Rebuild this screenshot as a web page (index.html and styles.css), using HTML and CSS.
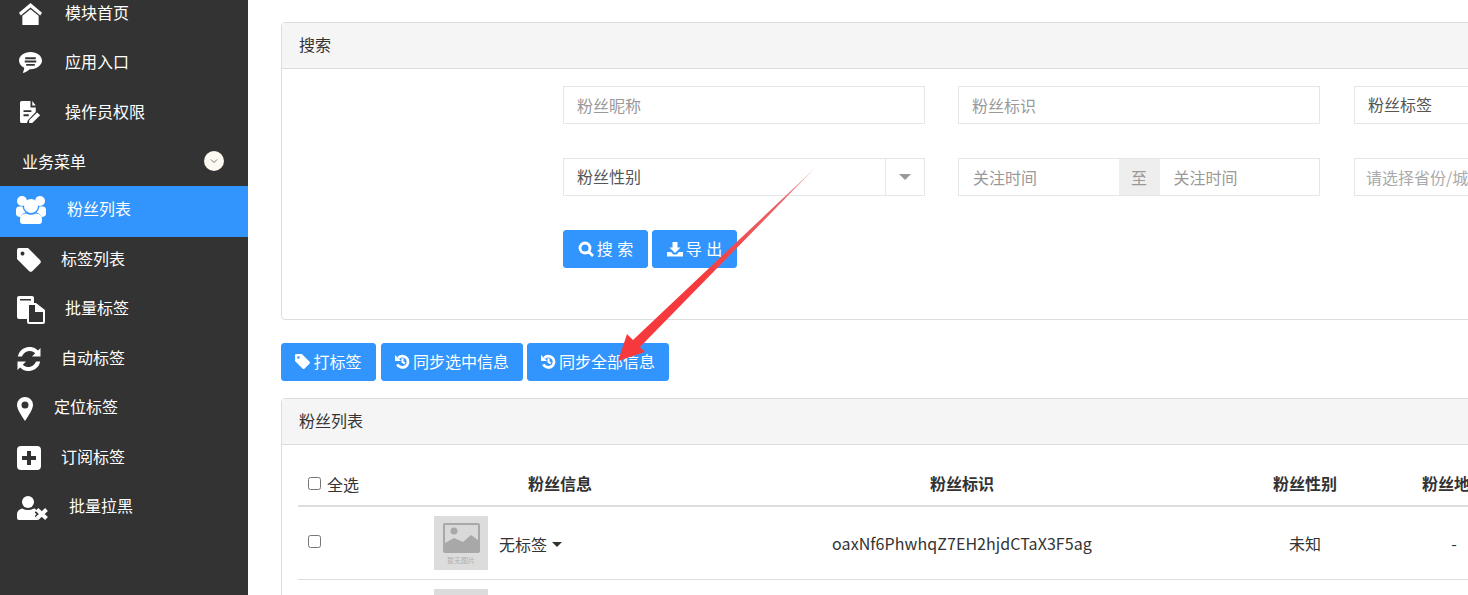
FILE: index.html
```html
<!DOCTYPE html>
<html lang="zh-CN">
<head>
<meta charset="utf-8">
<title>粉丝列表</title>
<link rel="stylesheet" href="styles.css">
</head>
<body>
<div class="app">
  <aside class="sidebar">
    <ul class="menu">
      <li class="item"><svg class="ic ic-home" viewBox="0 0 24 24" preserveAspectRatio="none"><path d="M12 0 0 10.500 1.800 13.500 12 4.800 22.200 13.500 24 10.500Z"/><path d="M3.500 14 12 6.800 20.500 14V24H3.500Z"/></svg><span class="t t-home">模块首页</span></li>
      <li class="item"><svg class="ic ic-chat" viewBox="0 0 24 24"><path fill-rule="evenodd" d="M12 1C5.400 1 0 4.900 0 10c0 3.300 2.200 6 5.500 7.600C5.300 19.700 4.500 21.500 4 23c2.800-.6 5.300-2.200 7-4h1c6.600 0 12-4 12-9S18.600 1 12 1ZM6.500 6.500h11V8.500h-11ZM6 10h12v2H6ZM7.500 13.500h9v2h-9Z"/></svg><span class="t t-home">应用入口</span></li>
      <li class="item"><svg class="ic ic-doc" viewBox="0 0 24 24" preserveAspectRatio="none"><path fill-rule="evenodd" d="M2 0H12V7H18V12L9 21 8 24H2A2 2 0 0 1 0 22V2A2 2 0 0 1 2 0ZM14 0 18 5H14ZM4 10V12H13V10ZM4 14.500V16.500H10V14.500Z"/><path d="M19.500 12.500 23 15.500 14 24H10.500V21Z"/></svg><span class="t t-home">操作员权限</span></li>
      <li class="item section"><span class="t t-sec">业务菜单</span><span class="toggle"><svg viewBox="0 0 10 10"><path d="M2 3.500 5 6.500 8 3.500" fill="none" stroke="#777" stroke-width="1"/></svg></span></li>
      <li class="item active"><svg class="ic ic-users" viewBox="0 0 30 28"><circle cx="6" cy="5" r="5"/><circle cx="24" cy="5" r="5"/><circle cx="15" cy="10" r="7"/><path d="M0 13A3 3 0 0 1 3 10.500H6.500Q7 14 9.500 16.500 5.500 17.500 4.500 21 0 20.500 0 18Z"/><path d="M30 13A3 3 0 0 0 27 10.500H23.500Q23 14 20.500 16.500 24.500 17.500 25.500 21 30 20.500 30 18Z"/><path d="M10 17.500Q15 20 20 17.500 26 18 26 23V25Q26 28 23 28H7Q4 28 4 25V23Q4 18 10 17.500Z"/></svg><span class="t t-fans">粉丝列表</span></li>
      <li class="item lower"><svg class="ic ic-tag" viewBox="0 0 24 24"><path fill-rule="evenodd" d="M2 0H11L23 12A2.500 2.500 0 0 1 23 15.500L15.500 23A2.500 2.500 0 0 1 12 23L0 11V2A2 2 0 0 1 2 0ZM5.500 3.500A2 2 0 1 0 5.500 7.500 2 2 0 0 0 5.500 3.500Z"/></svg><span class="t t-tag">标签列表</span></li>
      <li class="item lower"><svg class="ic ic-copy" viewBox="0 0 28 28"><path fill-rule="evenodd" d="M2 0H15A2 2 0 0 1 17 2V7H19L28 14V26A2 2 0 0 1 26 28H12A2 2 0 0 1 10 26V23H2A2 2 0 0 1 0 21V2A2 2 0 0 1 2 0ZM3 3V4.500H14V3ZM12 9V26H26V16H18V9Z"/><path d="M20 9V14H26Z"/></svg><span class="t t-batch">批量标签</span></li>
      <li class="item lower"><svg class="ic ic-sync" viewBox="0 0 24 24"><path d="M23.500 1V9.500H15L18.200 6.300A8 8 0 0 0 5 9.500H.8A12 12 0 0 1 21 3.500Z"/><path d="M.5 23V14.500H9L5.800 17.700A8 8 0 0 0 19 14.500H23.200A12 12 0 0 1 3 20.500Z"/></svg><span class="t t-sync">自动标签</span></li>
      <li class="item lower"><svg class="ic ic-pin" viewBox="0 0 16 24"><path fill-rule="evenodd" d="M8 0A8 8 0 0 0 0 8C0 12 4 18 8 24 12 18 16 12 16 8A8 8 0 0 0 8 0ZM8 4.500A3.500 3.500 0 1 1 8 11.500 3.500 3.500 0 0 1 8 4.500Z"/></svg><span class="t t-pin">定位标签</span></li>
      <li class="item lower"><svg class="ic ic-plus" viewBox="0 0 24 24"><path fill-rule="evenodd" d="M4 0H20A4 4 0 0 1 24 4V20A4 4 0 0 1 20 24H4A4 4 0 0 1 0 20V4A4 4 0 0 1 4 0ZM10 5V10H5V14H10V19H14V14H19V10H14V5Z"/></svg><span class="t t-tag">订阅标签</span></li>
      <li class="item lower"><svg class="ic ic-ban" viewBox="0 0 32 24"><circle cx="11" cy="6" r="6"/><path d="M5 12.500Q11 15.500 17 12.500 20 13 21 16V24H2A2 2 0 0 1 0 22V18Q0 14 5 12.500Z"/><path d="M20 14 29.500 22.500M29.500 14 20 22.500" fill="none" stroke="#333" stroke-width="7"/><path d="M20 13.500 29.500 22.500M29.500 13.500 20 22.500" fill="none" stroke="#fff" stroke-width="4"/></svg><span class="t t-ban">批量拉黑</span></li>
    </ul>
  </aside>
  <main class="main">
    <section class="panel search">
      <h2 class="panel-head">搜索</h2>
      <div class="search-body">
        <div class="field ph">粉丝昵称</div>
        <div class="field ph">粉丝标识</div>
        <div class="field val">粉丝标签</div>
        <div class="field val select"><span class="select-text">粉丝性别</span><span class="select-arrow"><i class="caret"></i></span></div>
        <div class="field range"><span class="ph range-in">关注时间</span><span class="addon">至</span><span class="ph range-in">关注时间</span></div>
        <div class="field ph small">请选择省份/城市</div>
        <div class="actions">
          <button class="btn spaced"><svg class="bi bi-lg" viewBox="0 0 16 16"><path fill="none" stroke="#fff" stroke-width="2.800" d="M7 2a5 5 0 1 0 0 10 5 5 0 0 0 0-10ZM10.500 10.500 15 15"/></svg>搜 索</button>
          <button class="btn spaced"><svg class="bi bi-lg" viewBox="0 0 16 16"><path d="M5.500 1h5v5.500h3L8 12 2.500 6.500h3Z"/><path d="M0 11h4l2.500 2.500h3L12 11h4v4.500H0Z"/></svg>导 出</button>
        </div>
      </div>
    </section>
    <div class="toolbar">
      <button class="btn"><svg class="bi" viewBox="0 0 24 24"><path fill-rule="evenodd" d="M2 0H11L23 12A2.500 2.500 0 0 1 23 15.500L15.500 23A2.500 2.500 0 0 1 12 23L0 11V2A2 2 0 0 1 2 0ZM5.500 3.500A2 2 0 1 0 5.500 7.500 2 2 0 0 0 5.500 3.500Z"/></svg>打标签</button>
      <button class="btn"><svg class="bi" viewBox="0 0 16 16"><path fill="none" stroke="#fff" stroke-width="3" d="M3.500 4.200A6 6 0 1 1 2.500 11"/><path d="M0 1 6.500 7.500H0Z"/><path fill="none" stroke="#fff" stroke-width="2.200" d="M8 4.500V8.500L10.500 10"/></svg>同步选中信息</button>
      <button class="btn"><svg class="bi" viewBox="0 0 16 16"><path fill="none" stroke="#fff" stroke-width="3" d="M3.500 4.200A6 6 0 1 1 2.500 11"/><path d="M0 1 6.500 7.500H0Z"/><path fill="none" stroke="#fff" stroke-width="2.200" d="M8 4.500V8.500L10.500 10"/></svg>同步全部信息</button>
    </div>
    <section class="panel list">
      <h2 class="panel-head">粉丝列表</h2>
      <div class="list-body">
        <table class="table">
          <colgroup><col class="c1"><col class="c2"><col class="c3"><col class="c4"><col class="c5"></colgroup>
          <thead>
            <tr>
              <th class="check-all"><label class="all"><input type="checkbox" class="cb">全选</label></th>
              <th>粉丝信息</th><th>粉丝标识</th><th>粉丝性别</th><th>粉丝地区</th>
            </tr>
          </thead>
          <tbody>
            <tr>
              <td class="check"><input type="checkbox" class="cb"></td>
              <td class="info"><div class="info-wrap"><span class="thumb"><svg viewBox="0 0 54 54"><rect x="9" y="7" width="37" height="30" rx="2" fill="#a8a8a8"/><rect x="11" y="9" width="33" height="18" fill="#d9d9d9"/><circle cx="20" cy="15" r="3.500" fill="#a8a8a8"/><path d="M11 27 20 22 29 26 37 19 44 24V28H11Z" fill="#a8a8a8"/></svg><em class="thumb-text">暂无图片</em></span><span class="tagdrop">无标签<i class="caret dark"></i></span></div></td>
              <td class="mono">oaxNf6PhwhqZ7EH2hjdCTaX3F5ag</td>
              <td>未知</td>
              <td>-</td>
            </tr>
            <tr>
              <td></td>
              <td class="info"><div class="info-wrap"><span class="thumb"></span></div></td>
              <td></td><td></td><td></td>
            </tr>
          </tbody>
        </table>
      </div>
    </section>
  </main>
</div>
<svg class="arrow" viewBox="0 0 1468 595"><defs><linearGradient id="ag" gradientUnits="userSpaceOnUse" x1="816" y1="167" x2="700" y2="282"><stop offset="0" stop-color="#f08a8a" stop-opacity=".5"/><stop offset=".3" stop-color="#e8656a"/><stop offset="1" stop-color="#f5393c"/></linearGradient></defs><path fill="url(#ag)" d="M816 167 640 347 645 352 618 361 627 334 633 340Z"/></svg>
</body>
</html>
```

FILE: styles.css
```css
* { box-sizing: border-box; }
html, body { margin: 0; height: 595px; overflow: hidden; background: #fff; }
body { font-family: "Noto Sans CJK SC", "Liberation Sans", sans-serif; font-size: 16px; color: #333; position: relative; }
.app { display: flex; width: 1468px; height: 595px; overflow: hidden; }

/* sidebar */
.sidebar { flex: 0 0 248px; background: #333; color: #fff; overflow: hidden; }
.menu { list-style: none; margin: -13px 0 0; padding: 0; }
.item { display: flex; align-items: center; height: 49.500px; padding-left: 17px; font-size: 16px; line-height: 24px; }
.ic { fill: #fff; flex: none; display: block; margin-top: 2px; }
.t { white-space: nowrap; }
.lower .t { margin-bottom: 3px; }
.ic-home { width: 23px; height: 22px; margin-left: 2px; margin-top: 4px; }
.ic-chat { width: 23px; height: 23px; margin-left: 2px; margin-top: 3px; }
.ic-doc { width: 21px; height: 22px; margin-left: 3px; margin-top: 3px; }
.t-home { margin-left: 23px; }
.item:nth-child(3) .t-home { margin-left: 24px; }
.section { height: 50.500px; padding-left: 22px; }
.t-sec { flex: none; }
.toggle { width: 20px; height: 20px; border-radius: 50%; background: #fdf9f0; margin-left: 118px; display: flex; align-items: center; justify-content: center; margin-top: 1px; }
.toggle svg { width: 10px; height: 10px; }
.active { background: #3295fd; height: 51px; margin-bottom: -2.750px; padding-bottom: 3px; }
.active .ic { margin-top: 0; }
.active .t { margin-bottom: 4px; }
.ic-users { width: 30px; height: 28px; margin-left: -1px; }
.t-fans { margin-left: 21px; }
.ic-tag { width: 24px; height: 24px; }
.t-tag { margin-left: 20px; }
.ic-copy { width: 28px; height: 28px; }
.t-batch { margin-left: 20px; }
.ic-sync { width: 24px; height: 24px; }
.t-sync { margin-left: 20px; }
.ic-pin { width: 16px; height: 24px; }
.t-pin { margin-left: 21px; }
.ic-plus { width: 24px; height: 24px; }
.ic-ban { width: 32px; height: 24px; }
.t-ban { margin-left: 20px; }

/* main */
.main { flex: none; width: 1400px; padding: 22px 0 0 33px; }
.panel { border: 1px solid #ddd; border-radius: 4px 0 0 4px; background: #fff; }
.panel-head { margin: 0; height: 46px; padding: 0 17px; line-height: 43px; font-size: 16px; font-weight: 400; background: #f5f5f5; border-bottom: 1px solid #ddd; color: #333; }
.search { height: 298px; }
.search-body { display: grid; grid-template-columns: 362px 362px 362px; column-gap: 33px; row-gap: 34px; grid-auto-rows: 38px; padding: 17px 0 0 281px; }
.field { border: 1px solid #e5e6e7; height: 38px; line-height: 36px; padding: 0 13px; white-space: nowrap; overflow: hidden; background: #fff; }
.search-body .field:nth-child(3n) { margin-left: 1px; }
.ph { color: #999; }
.val { color: #555; line-height: 34px; }
.small { padding-left: 11px; color: #aaa; }
.select { display: flex; padding: 0 0 0 13px; }
.select-text { flex: 1; }
.select-arrow { flex: 0 0 39px; border-left: 1px solid #e5e6e7; display: flex; align-items: center; justify-content: center; }
.caret { display: inline-block; width: 0; height: 0; border: 6px solid transparent; border-top: 6px solid #999; border-bottom: 0; }
.range { display: flex; padding: 0; }
.range-in { flex: 1; padding-left: 14px; }
.addon { flex: 0 0 41px; background: #eee; color: #999; text-align: center; font-size: 16px; }
.actions { grid-column: 1 / -1; display: flex; gap: 4px; }
.btn { height: 38px; border: 1px solid #3295fd; border-radius: 3px; background: #3295fd; color: #fff; font: inherit; line-height: 32px; padding: 0 0 2px; display: inline-flex; align-items: center; justify-content: center; white-space: nowrap; }
.bi { width: 15px; height: 15px; fill: #fff; margin-right: 3px; flex: none; margin-top: 1px; }
.bi-lg { width: 16px; height: 16px; }
.spaced { width: 85px; word-spacing: 1px; }
.toolbar { display: flex; gap: 4px; margin-top: 23px; }
.toolbar .btn:first-child { width: 95px; margin-right: 1px; }
.toolbar .btn { width: 142px; }
.list { margin-top: 17px; height: 400px; }
.list-body { padding: 16px 0 0 16px; }
.table { border-collapse: collapse; table-layout: fixed; width: 1222px; }
.c1 { width: 120px; } .c2 { width: 284px; } .c3 { width: 520px; } .c4 { width: 166px; } .c5 { width: 132px; }
th { height: 45px; border-bottom: 2px solid #ddd; font-weight: 700; text-align: center; padding: 0; line-height: 24px; font-size: 16px; white-space: nowrap; }
th.check-all { text-align: left; font-weight: 400; padding-left: 9px; }
.all { display: flex; align-items: flex-start; line-height: 24px; padding-top: 2px; }
.cb { width: 13px; height: 13px; margin: 5px 6px 0 1px; flex: none; }
td { height: 73px; border-bottom: 1px solid #ddd; text-align: center; padding: 0; font-size: 16px; color: #333; }
td.check { text-align: left; padding-left: 9px; vertical-align: middle; }
td.check .cb { margin: 0 0 3px 1px; display: block; }
td.info { text-align: left; }
.mono { letter-spacing: .07px; }
.info-wrap { display: flex; align-items: center; padding-left: 16px; }
.thumb { position: relative; width: 54px; height: 54px; background: #dcdcdc; flex: none; display: block; }
.thumb svg { width: 54px; height: 54px; display: block; }
.thumb-text { position: absolute; left: 0; right: 0; bottom: 5px; text-align: center; font-size: 7px; line-height: 9px; font-style: normal; color: #b0b0b0; }
.tagdrop { margin-left: 11px; display: inline-flex; align-items: center; font-size: 16px; margin-top: 2px; }
.dark { border-width: 5px; border-top-color: #333; border-bottom: 0; margin-left: 5px; margin-top: 2px; }
.arrow { position: absolute; left: 0; top: 0; width: 1468px; height: 595px; pointer-events: none; }
```
